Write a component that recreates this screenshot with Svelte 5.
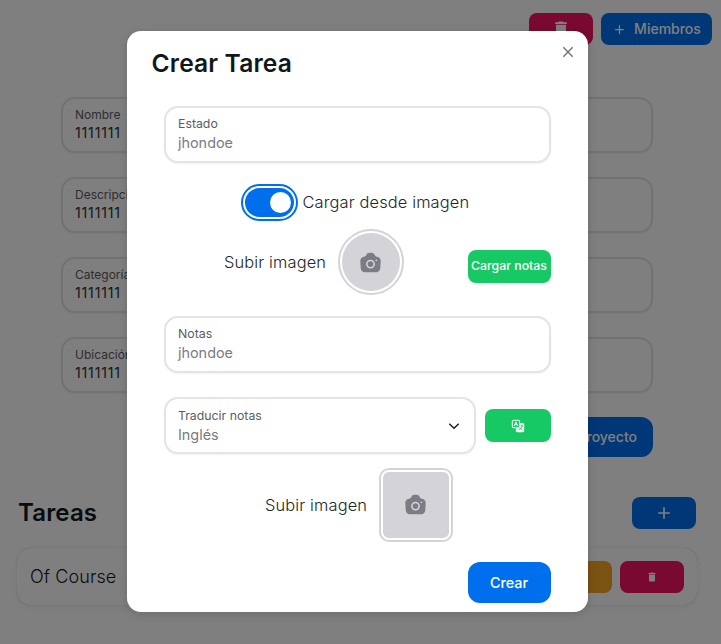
<script>
  const fields = ['Nombre', 'Descripción', 'Categoría', 'Ubicación'];
</script>

{#snippet trash(size)}
  <svg width={size} height={size} viewBox="0 0 24 24" fill="currentColor"><path d="M6 19c0 1.1.9 2 2 2h8c1.1 0 2-.9 2-2V7H6zM19 4h-3.500l-1-1h-5l-1 1H5v2h14z" /></svg>
{/snippet}

{#snippet plus(size)}
  <svg width={size} height={size} viewBox="0 0 24 24" fill="none" stroke="currentColor" stroke-width="2"><path d="M12 5v14M5 12h14" /></svg>
{/snippet}

{#snippet camera()}
  <svg class="camera" width="25" height="25" viewBox="0 0 24 24">
    <path fill="currentColor" d="M17.900 6.400c-.6 0-1.100-.3-1.400-.8l-.7-1.400C15.400 3.300 14.300 2.600 13.400 2.600h-2.800c-.9 0-2 .7-2.400 1.600l-.7 1.400c-.3.500-.8.800-1.400.8-2.200 0-4 1.900-3.900 4.100l.4 6.700c.2 2.300 1.400 4.100 4.600 4.100h9.600c3.200 0 4.400-1.800 4.600-4.100l.4-6.700c.1-2.200-1.700-4.100-3.900-4.100z" />
    <circle cx="12" cy="13.500" r="3.500" fill="none" stroke="#d4d4d8" stroke-width="1.500" />
    <circle cx="17.600" cy="9.900" r=".8" fill="#d4d4d8" />
  </svg>
{/snippet}

<div class="page">
  <header>
    <button class="btn danger">{@render trash(20)}</button>
    <button class="btn primary members">{@render plus(15)}<span>Miembros</span></button>
  </header>

  <section class="project">
    {#each fields as label}
      <div class="field"><span class="label">{label}</span><span class="value">1111111</span></div>
    {/each}
    <button class="btn primary edit">Editar proyecto</button>
  </section>

  <section class="tasks">
    <div class="tasks-head">
      <h2>Tareas</h2>
      <button class="btn primary">{@render plus(20)}</button>
    </div>
    <div class="card">
      <span class="name">Of Course</span>
      <button class="btn warning" aria-label="Editar"></button>
      <button class="btn danger">{@render trash(12)}</button>
    </div>
  </section>
</div>

<div class="backdrop">
  <div class="modal" role="dialog">
    <button class="close" aria-label="Cerrar">
      <svg width="16" height="16" viewBox="0 0 16 16" fill="none" stroke="currentColor" stroke-width="1.400"><path d="M3.300 3.300l9.400 9.400M12.700 3.300l-9.400 9.400" /></svg>
    </button>
    <h2>Crear Tarea</h2>

    <div class="field"><span class="label">Estado</span><span class="value">jhondoe</span></div>

    <div class="toggle">
      <span class="switch"><span class="track"><span class="thumb"></span></span></span>
      <span class="text">Cargar desde imagen</span>
    </div>

    <div class="upload">
      <span class="text">Subir imagen</span>
      <span class="avatar round"><span>{@render camera()}</span></span>
      <button class="btn success load">Cargar notas</button>
    </div>

    <div class="field notes"><span class="label">Notas</span><span class="value">jhondoe</span></div>

    <div class="translate">
      <div class="field select">
        <span class="label">Traducir notas</span><span class="value">Inglés</span>
        <svg width="16" height="16" viewBox="0 0 16 16" fill="none" stroke="currentColor" stroke-width="1.300"><path d="M3.300 5.700L8 10.300l4.700-4.600" /></svg>
      </div>
      <button class="btn success" aria-label="Traducir">
        <svg width="14" height="14" viewBox="0 0 14 14">
          <path fill="currentColor" d="M9 4.300h3c.7 0 1.200.5 1.200 1.200v6.500c0 .7-.5 1.200-1.200 1.200H6c-.7 0-1.200-.5-1.200-1.200V9.200H9z" />
          <rect x="1.300" y="1.300" width="7.300" height="7.400" rx=".7" fill="#17c964" stroke="currentColor" />
          <path d="M3.200 7l1.700-4.200L6.700 7M3.900 5.700H6" fill="none" stroke="currentColor" stroke-width=".9" />
          <path d="M9.700 6.600h2.300M11.300 6.700c-.4 2-1.400 3.300-3.300 4M9 8.900l2.600 2.100" fill="none" stroke="#17c964" stroke-width=".9" />
        </svg>
      </button>
    </div>

    <div class="picture">
      <span class="text">Subir imagen</span>
      <span class="avatar"><span>{@render camera()}</span></span>
    </div>

    <div class="footer"><button class="btn primary create">Crear</button></div>
  </div>
</div>

<style>
  :global(body) { margin: 0; background: #fff; }
  .page, .backdrop {
    width: 721px; height: 644px; box-sizing: border-box; overflow: hidden;
    font-family: Inter, "Liberation Sans", sans-serif; color: #11181c;
  }
  .page *, .backdrop * { box-sizing: border-box; }
  svg { display: block; flex: none; }
  h2 { margin: 0; font-size: 24px; line-height: 32px; font-weight: 600; letter-spacing: .15px; }
  .btn {
    display: flex; align-items: center; justify-content: center; flex: none;
    width: 64px; height: 32px; padding: 0; border: 0; border-radius: 8px;
    font: 500 14px/20px Inter, "Liberation Sans", sans-serif; color: #fff; white-space: nowrap;
  }
  .primary { background: #006fee; }
  .danger { background: #f31260; }
  .warning { background: #f5a524; }
  .success { background: #17c964; }

  header { display: flex; justify-content: flex-end; gap: 8px; padding: 13px 9px 0 0; }
  .members { width: 111px; gap: 7px; font-size: 14px; }

  .field {
    display: flex; flex-direction: column; justify-content: center;
    height: 56px; padding: 0 12px; border: 2px solid #e4e4e7; border-radius: 14px;
    background: #fff; box-shadow: 0 1px 2px rgba(0, 0, 0, .05);
  }
  .label { font-size: 12px; line-height: 16px; color: #5c5c65; }
  .value { font-size: 14px; line-height: 20px; letter-spacing: .85px; color: #2a2e32; }

  .project { display: flex; flex-direction: column; gap: 24px; width: 592px; margin: 52px 0 0 61px; }
  .edit { justify-content: flex-end; align-self: flex-end; width: 138px; height: 40px; padding-right: 16px; border-radius: 12px; }

  .tasks { width: 680px; margin: 40px 0 0 17px; }
  .tasks-head { display: flex; justify-content: space-between; align-items: center; height: 32px; padding: 0 1px; }
  .card {
    display: flex; align-items: center; gap: 8px; height: 57px; margin-top: 19px; padding: 0 13px;
    border-radius: 14px; background: #fff;
    box-shadow: 0 0 1px rgba(0, 0, 0, .3), 0 2px 10px rgba(0, 0, 0, .06);
  }
  .name { flex: 1; font-size: 18px; font-weight: 300; letter-spacing: .1px; }

  .backdrop { position: absolute; inset: 0; padding: 31px 0 0 126.500px; background: rgba(0, 0, 0, .5); }
  .modal {
    position: relative; width: 461.500px; height: 581px; padding: 16px 37.500px 0; border-radius: 14px;
    background: #fff; box-shadow: 0 2px 10px rgba(0, 0, 0, .15);
  }
  .modal h2 { margin-left: -12.500px; font-size: 24.600px; line-height: 33px; }
  .close { position: absolute; top: 13px; right: 12.500px; padding: 0; border: 0; background: none; color: #71717a; }
  .modal .field { height: 57px; }
  .modal h2 + .field { margin-top: 25.500px; }
  .modal .label { font-size: 12.300px; line-height: 17px; }
  .modal .value { font-size: 14.400px; line-height: 21px; letter-spacing: 0; color: #7b7b83; }
  .text { font-size: 16.400px; line-height: 24px; font-weight: 300; letter-spacing: .15px; white-space: nowrap; color: #20272b; }

  .toggle { display: flex; align-items: center; gap: 5px; height: 38px; margin: 20.500px 0 0 76.500px; }
  .switch { padding: 2px; border: 2px solid #006fee; border-radius: 20px; }
  .track { display: flex; align-items: center; justify-content: flex-end; width: 49px; height: 29px; padding: 0 3px; border-radius: 15px; background: #006fee; }
  .thumb { width: 21px; height: 21px; border-radius: 50%; background: #fff; }

  .upload { display: flex; align-items: center; height: 66px; margin: 8px 0 0 60px; }
  .avatar { flex: none; width: 74px; height: 74px; padding: 2px; border: 2px solid #d4d4d8; border-radius: 10px; }
  .avatar > span { display: flex; align-items: center; justify-content: center; height: 100%; border-radius: 6px; background: #d4d4d8; }
  .round, .round > span { border-radius: 50%; }
  .round { width: 66px; height: 66px; margin-left: 11.500px; }
  .camera { color: #7c7c84; }
  .load { width: 83px; height: 33px; margin: 8px 0 0 auto; font-size: 12.300px; }
  .notes { margin-top: 20.500px; }

  .translate { display: flex; align-items: center; gap: 9px; margin-top: 24.900px; }
  .translate .btn { width: 66px; height: 33px; }
  .select { position: relative; flex: 1; }
  .select svg { position: absolute; right: 12px; top: 19px; }

  .picture { display: flex; align-items: center; gap: 11.500px; margin: 13.600px 0 0 101px; }
  .footer { display: flex; justify-content: flex-end; margin-top: 20.500px; }
  .create { width: 83px; height: 41px; border-radius: 12px; font-size: 14.400px; }
</style>
